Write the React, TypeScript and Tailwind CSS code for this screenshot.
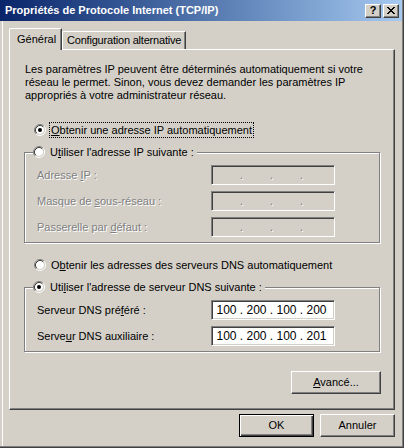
import React from 'react';

const FONT = "font-['Liberation_Sans',Arial,sans-serif]";

const Radio = ({ checked }: { checked?: boolean }) => (
  <svg width="12" height="12" viewBox="0 0 12 12" className="shrink-0">
    <circle cx="6" cy="6" r="4" fill="#ffffff" />
    <path d="M2.11 9.89 A5.5 5.5 0 0 1 9.89 2.11" stroke="#808080" fill="none" />
    <path d="M9.89 2.11 A5.5 5.5 0 0 1 2.11 9.89" stroke="#ffffff" fill="none" />
    <path d="M2.82 9.18 A4.5 4.5 0 0 1 9.18 2.82" stroke="#404040" fill="none" />
    <path d="M9.18 2.82 A4.5 4.5 0 0 1 2.82 9.18" stroke="#d4d0c8" fill="none" />
    {checked && <circle cx="6" cy="6" r="2" fill="#000000" />}
  </svg>
);

const RadioRow = ({ checked, focused, children }: { checked?: boolean; focused?: boolean; children: React.ReactNode }) => (
  <div className="flex items-center h-[16px]">
    <Radio checked={checked} />
    <span
      className={`ml-[3px] px-[1px] leading-[14px] whitespace-nowrap border ${focused ? 'border-dotted border-black' : 'border-transparent'}`}
    >
      {children}
    </span>
  </div>
);

const IpField = ({ value, disabled }: { value?: string[]; disabled?: boolean }) => {
  const parts = value ?? ['', '', '', ''];
  return (
    <div
      className={`w-[124px] h-[20px] border border-t-[#808080] border-l-[#808080] border-b-white border-r-white shadow-[inset_1px_1px_0_#404040,inset_-1px_-1px_0_#d4d0c8] flex items-center pl-[3px] ${
        disabled ? 'bg-[#d4d0c8]' : 'bg-white'
      }`}
    >
      {parts.map((p, i) => (
        <React.Fragment key={i}>
          <span className="w-[23px] text-center text-[12px] leading-[14px] text-black">{p}</span>
          {i < 3 && (
            <span
              className={`w-[7px] text-center text-[12px] leading-[14px] ${
                disabled ? 'text-[#808080] [text-shadow:1px_1px_0_#ffffff]' : 'text-black'
              }`}
            >
              .
            </span>
          )}
        </React.Fragment>
      ))}
    </div>
  );
};

const FieldRow = ({ label, value, disabled }: { label: React.ReactNode; value?: string[]; disabled?: boolean }) => (
  <div className="flex items-center h-[20px]">
    <span
      className={`w-[174px] leading-[14px] ${disabled ? 'text-[#808080] [text-shadow:1px_1px_0_#ffffff]' : 'text-black'}`}
    >
      {label}
    </span>
    <IpField value={value} disabled={disabled} />
  </div>
);

const GroupBox = ({ legend, children }: { legend: React.ReactNode; children: React.ReactNode }) => (
  <div className="relative w-[356px] -ml-[1px] border border-[#808080] shadow-[inset_1px_1px_0_#ffffff,1px_1px_0_#ffffff] pl-[12px] pt-[12px] pb-[5px] flex flex-col gap-[6px]">
    <div className="absolute left-[8px] top-[-9px] bg-[#d4d0c8] pr-[1px]">{legend}</div>
    {children}
  </div>
);

const Button = ({ children, isDefault, className }: { children: React.ReactNode; isDefault?: boolean; className?: string }) => (
  <div
    className={`h-[23px] flex items-center justify-center bg-[#d4d0c8] ${
      isDefault
        ? 'border border-black shadow-[inset_1px_1px_0_#ffffff,inset_-1px_-1px_0_#404040,inset_-2px_-2px_0_#808080]'
        : 'border border-t-white border-l-white border-b-[#404040] border-r-[#404040] shadow-[inset_-1px_-1px_0_#808080]'
    } ${className ?? ''}`}
  >
    {children}
  </div>
);

const TitleButton = ({ children }: { children: React.ReactNode }) => (
  <div className="w-[16px] h-[14px] bg-[#d4d0c8] border border-t-white border-l-white border-b-[#404040] border-r-[#404040] shadow-[inset_-1px_-1px_0_#808080] flex items-center justify-center">
    {children}
  </div>
);

export default function App() {
  return (
    <div className={`${FONT} text-[11px] text-black w-[404px] h-[448px] bg-[#d4d0c8] border-r border-b border-[#404040] flex flex-col`}>
      <div className="flex-1 flex flex-col border-r border-b border-[#808080]">
        {/* title bar */}
        <div className="h-[21px] bg-linear-to-r from-[#0a246a] to-[#a6caf0] flex items-center pl-[5px] pr-[3px]">
          <span className="text-white font-bold text-[11px] leading-[13px] flex-1">
            Propriétés de Protocole Internet (TCP/IP)
          </span>
          <div className="flex">
            <TitleButton>
              <span className="font-bold text-[11px] leading-[10px] text-black -mt-[1px]">?</span>
            </TitleButton>
            <div className="ml-[2px]">
              <TitleButton>
                <svg width="8" height="7" viewBox="0 0 8 7">
                  <path d="M0 0 L7 7 M1 0 L8 7 M7 0 L0 7 M8 0 L1 7" stroke="#000" strokeWidth="1" shapeRendering="crispEdges" />
                </svg>
              </TitleButton>
            </div>
          </div>
        </div>

        <div className="flex-1 flex flex-col ml-[2px] border-l border-white pl-[6px]">
          {/* tabs */}
          <div className="mt-[7px] h-[21px] flex items-end">
            <div className="relative z-10 -mb-[1px] h-[22px] w-[53px] bg-[#d4d0c8] border-l border-t border-white border-r border-r-[#404040] shadow-[inset_-1px_0_0_#808080] rounded-tl-[2px] flex items-center pl-[7px]">
              Général
            </div>
            <div className="h-[18px] w-[124px] bg-[#d4d0c8] border-l border-t border-white border-r border-r-[#404040] shadow-[inset_-1px_0_0_#808080] rounded-tl-[2px] flex items-center pl-[4px] tracking-[-0.2px] whitespace-nowrap overflow-hidden">
              Configuration alternative
            </div>
          </div>

          {/* panel */}
          <div className="w-[386px] h-[361px] border-l border-t border-white border-r border-b border-r-[#404040] border-b-[#404040] shadow-[inset_-1px_-1px_0_#808080] pl-[15px] pt-[13px] flex flex-col">
            <p className="leading-[13px]">
              Les paramètres IP peuvent être déterminés automatiquement si votre
              <br />
              réseau le permet. Sinon, vous devez demander les paramètres IP
              <br />
              appropriés à votre administrateur réseau.
            </p>

            <div className="mt-[20px] ml-[9px]">
              <RadioRow checked focused>
                <u>O</u>btenir une adresse IP automatiquement
              </RadioRow>
            </div>

            <div className="mt-[14px]">
              <GroupBox
                legend={
                  <RadioRow>
                    U<u>t</u>iliser l'adresse IP suivante :
                  </RadioRow>
                }
              >
                <FieldRow disabled label={<>Adresse <u>I</u>P :</>} />
                <FieldRow disabled label={<>Masque de <u>s</u>ous-réseau :</>} />
                <FieldRow disabled label={<>Passerelle par <u>d</u>éfaut :</>} />
              </GroupBox>
            </div>

            <div className="mt-[14px] ml-[9px]">
              <RadioRow>
                O<u>b</u>tenir les adresses des serveurs DNS automatiquement
              </RadioRow>
            </div>

            <div className="mt-[14px]">
              <GroupBox
                legend={
                  <RadioRow checked>
                    Uti<u>l</u>iser l'adresse de serveur DNS suivante :
                  </RadioRow>
                }
              >
                <FieldRow label={<>Serveur DNS pré<u>f</u>éré :</>} value={['100', '200', '100', '200']} />
                <FieldRow label={<>Serve<u>u</u>r DNS auxiliaire :</>} value={['100', '200', '100', '201']} />
              </GroupBox>
            </div>

            <div className="mt-[19px] w-[356px] flex justify-end">
              <Button className="w-[90px]">
                <span>
                  <u>A</u>vancé...
                </span>
              </Button>
            </div>
          </div>

          {/* dialog buttons */}
          <div className="mt-[4px] flex justify-end gap-[6px] pr-[7px]">
            <Button isDefault className="w-[75px]">
              OK
            </Button>
            <Button className="w-[75px]">Annuler</Button>
          </div>
        </div>
      </div>
    </div>
  );
}
